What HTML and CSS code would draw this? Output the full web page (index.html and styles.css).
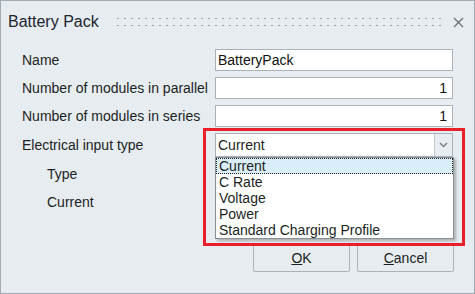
FILE: index.html
```html
<!DOCTYPE html>
<html lang="en">
<head>
    <meta charset="UTF-8">
    <title>Battery Pack</title>
    <link rel="stylesheet" href="styles.css">
</head>
<body>
    <div class="window">
        <div class="titlebar">
            <span class="title">Battery Pack</span>
            <div class="grip"></div>
            <svg class="close" width="11" height="11" viewBox="0 0 11 11">
                <path d="M1 1 L10 10 M10 1 L1 10" stroke="#6f7378" stroke-width="1.4" fill="none"/>
            </svg>
        </div>

        <div class="form">
            <label class="label">Name</label>
            <div class="field"><input type="text" class="input" value="BatteryPack"></div>

            <label class="label">Number of modules in parallel</label>
            <div class="field"><input type="text" class="input num" value="1"></div>

            <label class="label">Number of modules in series</label>
            <div class="field"><input type="text" class="input num" value="1"></div>

            <label class="label">Electrical input type</label>
            <div class="field">
                <div class="combo">
                    <span class="combo-value">Current</span>
                    <span class="combo-btn">
                        <svg width="9" height="6" viewBox="0 0 9 6">
                            <path d="M1 1 L4.5 4.5 L8 1" stroke="#7b848c" stroke-width="1.5" fill="none"/>
                        </svg>
                    </span>
                </div>
                <ul class="dropdown">
                    <li class="item selected">Current</li>
                    <li class="item">C Rate</li>
                    <li class="item">Voltage</li>
                    <li class="item">Power</li>
                    <li class="item">Standard Charging Profile</li>
                </ul>
            </div>

            <label class="label sub">Type</label>
            <div class="field"></div>

            <label class="label sub">Current</label>
            <div class="field"></div>
        </div>

        <div class="buttons">
            <button class="btn"><u>O</u>K</button>
            <button class="btn"><u>C</u>ancel</button>
        </div>

        <div class="highlight"></div>
    </div>
</body>
</html>
```

FILE: styles.css
```css
body {
    margin: 0;
    font-family: "Liberation Sans", Arial, sans-serif;
    font-size: 14px;
    color: #1b1f24;
}
.window {
    position: relative;
    width: 475px;
    height: 294px;
    box-sizing: border-box;
    border: 1px solid #a3abb2;
    background-color: #e6ecf0;
}
.titlebar {
    display: flex;
    align-items: center;
    height: 42px;
    padding: 0 10px 0 7px;
}
.title {
    font-size: 16px;
    color: #1c2430;
}
.grip {
    flex: 1;
    height: 14px;
    margin: 0 12px 0 18px;
    background-image: radial-gradient(circle at 1px 3.5px, #9ba1a6 1px, transparent 1.1px);
    background-size: 7px 7px;
}
.close {
    display: block;
}
.form {
    display: grid;
    grid-template-columns: 193px 238px;
    grid-template-rows: 22px 22px 22px 24px 22px 22px;
    row-gap: 6px;
    margin-top: 6px;
    padding-left: 21px;
}
.label {
    display: flex;
    align-items: center;
    white-space: nowrap;
}
.label.sub {
    padding-left: 25px;
}
.field {
    position: relative;
}
.input {
    width: 100%;
    height: 22px;
    box-sizing: border-box;
    border: 1px solid #aab2b9;
    background: #fff;
    font-family: inherit;
    font-size: 14px;
    color: #111;
    padding: 0 3px 0 2px;
    margin: 0;
}
.input.num {
    text-align: right;
    padding-right: 5px;
}
.combo {
    display: flex;
    height: 24px;
    box-sizing: border-box;
    border: 1px solid #aab2b9;
    background: #fff;
}
.combo-value {
    flex: 1;
    display: flex;
    align-items: center;
    padding-left: 2px;
}
.combo-btn {
    width: 17px;
    display: flex;
    align-items: center;
    justify-content: center;
    background: #e8edf1;
    border-left: 1px solid #c3c9ce;
}
.dropdown {
    position: absolute;
    top: 24px;
    left: 0;
    width: 239px;
    box-sizing: border-box;
    margin: 0;
    padding: 0;
    list-style: none;
    background: #fff;
    border: 1px solid #8a9096;
    box-shadow: 2px 2px 3px rgba(0, 0, 0, 0.28);
    z-index: 2;
}
.item {
    height: 16px;
    line-height: 16px;
    padding-left: 3px;
    box-sizing: border-box;
}
.item.selected {
    background: #d9eef9;
    outline: 1px dotted #222;
    outline-offset: -1px;
}
.buttons {
    display: flex;
    justify-content: flex-end;
    gap: 7px;
    margin-top: 30px;
    padding-right: 20px;
}
.btn {
    width: 97px;
    height: 29px;
    border: 1px solid #abb3ba;
    border-radius: 2px;
    background: #e6ecf0;
    font-family: inherit;
    font-size: 14px;
    color: #1b1f24;
    padding: 0;
}
.highlight {
    position: absolute;
    left: 202px;
    top: 127px;
    width: 262px;
    height: 118px;
    box-sizing: border-box;
    border: 3px solid #e8202b;
    z-index: 3;
}
```
